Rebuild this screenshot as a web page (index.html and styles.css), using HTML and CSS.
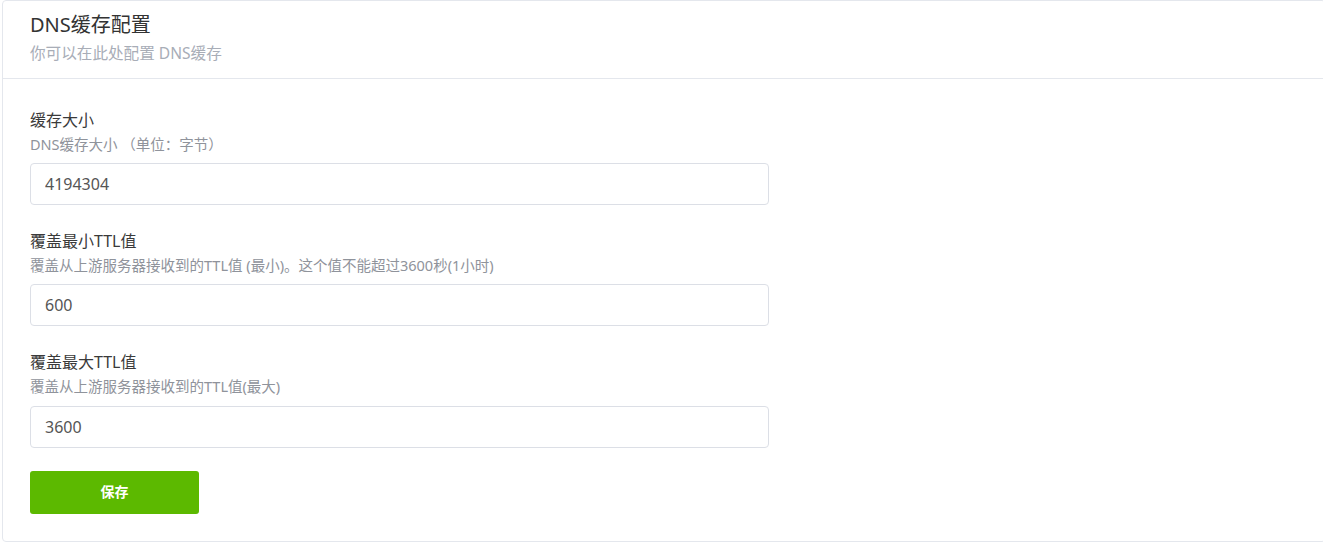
FILE: index.html
```html
<!DOCTYPE html>
<html lang="zh-CN">
<head>
<meta charset="utf-8">
<title>DNS缓存配置</title>
<link rel="stylesheet" href="styles.css">
</head>
<body>
<div class="card">
  <div class="card-header">
    <div class="card-title">DNS缓存配置</div>
    <div class="card-subtitle">你可以在此处配置 DNS缓存</div>
  </div>
  <form class="card-body">
    <div class="form-item">
      <div class="form-label">缓存大小</div>
      <div class="form-desc">DNS缓存大小 （单位：字节）</div>
      <input class="form-input" type="text" value="4194304">
    </div>
    <div class="form-item">
      <div class="form-label">覆盖最小TTL值</div>
      <div class="form-desc">覆盖从上游服务器接收到的TTL值 (最小)。这个值不能超过3600秒(1小时)</div>
      <input class="form-input" type="text" value="600">
    </div>
    <div class="form-item">
      <div class="form-label">覆盖最大TTL值</div>
      <div class="form-desc">覆盖从上游服务器接收到的TTL值(最大)</div>
      <input class="form-input" type="text" value="3600">
    </div>
    <button class="btn-save" type="button">保存</button>
  </form>
</div>
</body>
</html>
```

FILE: styles.css
```css
* { box-sizing: border-box; }
html, body { margin: 0; padding: 0; background: #fff; overflow: hidden; }
body {
  font-family: "Noto Sans", "Noto Sans CJK SC", sans-serif;
  color: #303133;
}
.card {
  margin-left: 2px;
  width: 1324px;
  height: 542px;
  border: 1px solid #e4e7ed;
  border-radius: 4px;
  background: #fff;
}
.card-header {
  padding: 10px 27px 14px 27px;
  border-bottom: 1px solid #e4e7ed;
}
.card-title {
  font-size: 20px;
  line-height: 28px;
  color: #333;
}
.card-subtitle {
  margin-top: 3px;
  font-size: 15.6px;
  line-height: 22px;
  color: #a8adb7;
}
.card-body {
  margin: 0;
  padding: 29px 27px 27px 27px;
}
.form-item { margin-bottom: 24px; }
.form-item + .form-item { margin-top: 0; }
.form-label {
  font-size: 16px;
  line-height: 24px;
  margin-bottom: 2px;
  color: #3a3a3a;
}
.form-desc {
  font-size: 14.5px;
  line-height: 20px;
  color: #8f939b;
  margin-bottom: 9px;
}
.form-item:last-of-type .form-desc { margin-bottom: 10px; }
.form-item:last-of-type { margin-bottom: 23px; }
.form-input {
  display: block;
  width: 739px;
  height: 42px;
  padding: 0 14px;
  border: 1px solid #dcdfe6;
  border-radius: 4px;
  font-family: inherit;
  font-size: 16px;
  color: #555;
  background: #fff;
  outline: none;
}
.btn-save {
  display: block;
  width: 169px;
  height: 43px;
  padding: 0 0 3px 0;
  border: none;
  border-radius: 3px;
  background: #5cb900;
  color: #fff;
  font-family: inherit;
  font-size: 14px;
  font-weight: bold;
  cursor: pointer;
}
```
